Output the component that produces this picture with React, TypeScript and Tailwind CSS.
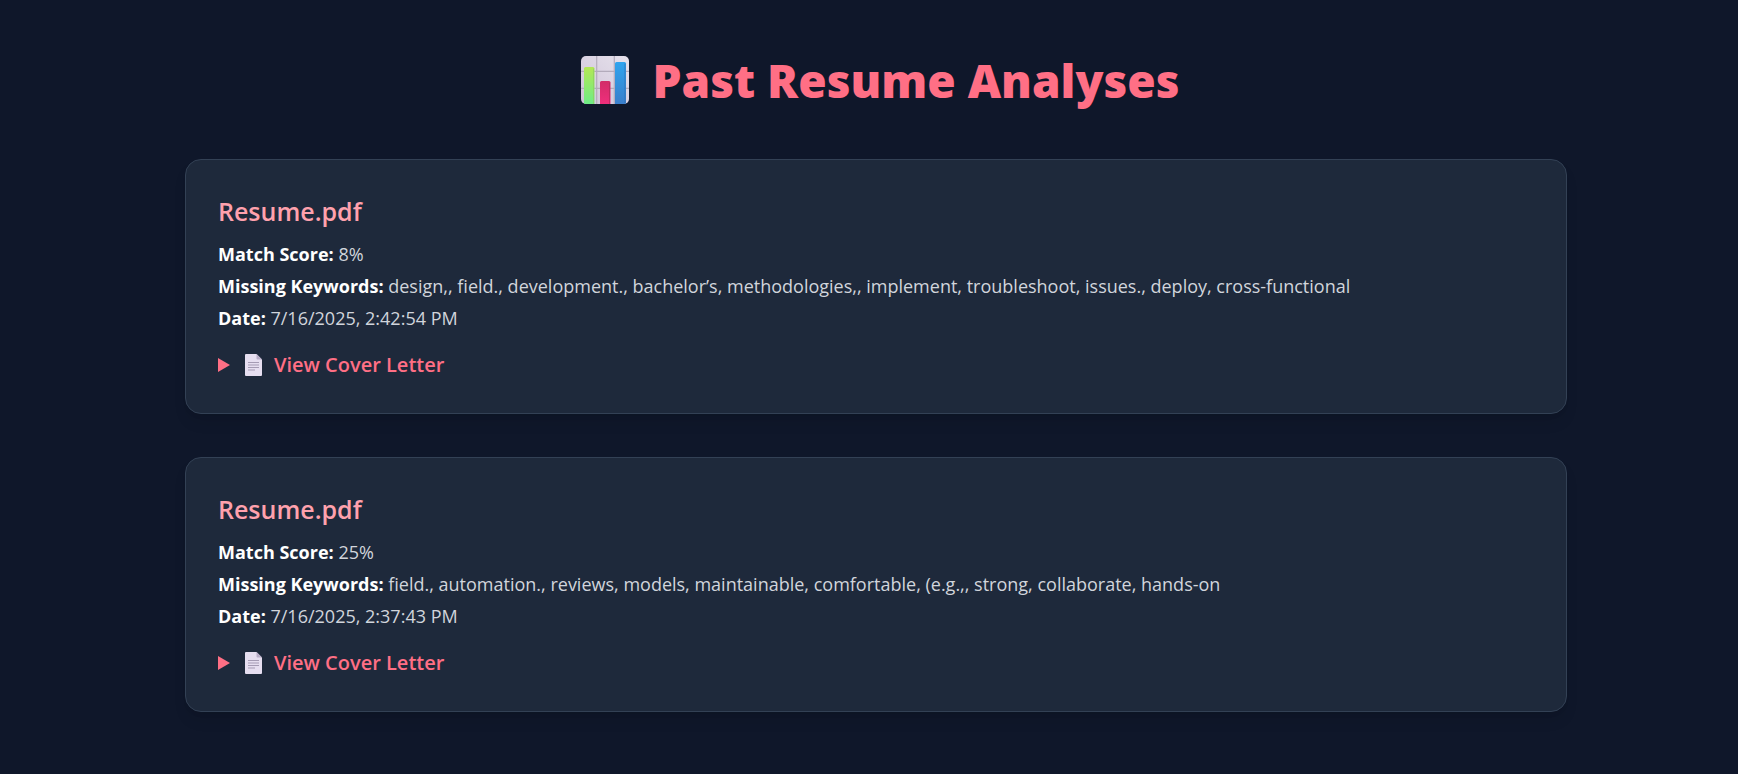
type Analysis = {
  id: number;
  file: string;
  score: string;
  keywords: string;
  date: string;
};

const analyses: Analysis[] = [
  {
    id: 1,
    file: "Resume.pdf",
    score: "8%",
    keywords:
      "design,, field., development., bachelor’s, methodologies,, implement, troubleshoot, issues., deploy, cross-functional",
    date: "7/16/2025, 2:42:54 PM",
  },
  {
    id: 2,
    file: "Resume.pdf",
    score: "25%",
    keywords:
      "field., automation., reviews, models, maintainable, comfortable, (e.g.,, strong, collaborate, hands-on",
    date: "7/16/2025, 2:37:43 PM",
  },
];

function ChartIcon() {
  return (
    <svg viewBox="0 0 48 48" className="size-12 shrink-0" aria-hidden="true">
      <defs>
        <linearGradient id="board" x1="0" y1="1" x2="1" y2="0">
          <stop offset="0" stopColor="#cfc3d8" />
          <stop offset="1" stopColor="#e6e2ec" />
        </linearGradient>
        <linearGradient id="green" x1="0" y1="0" x2="0" y2="1">
          <stop offset="0" stopColor="#b4e755" />
          <stop offset="1" stopColor="#6eec86" />
        </linearGradient>
        <linearGradient id="pink" x1="0" y1="0" x2="0" y2="1">
          <stop offset="0" stopColor="#d22c68" />
          <stop offset="1" stopColor="#ef2f7c" />
        </linearGradient>
        <linearGradient id="blue" x1="0" y1="0" x2="0" y2="1">
          <stop offset="0" stopColor="#2fa4ee" />
          <stop offset="1" stopColor="#3b7fcb" />
        </linearGradient>
        <clipPath id="frame">
          <rect width="48" height="48" rx="5" />
        </clipPath>
      </defs>
      <g clipPath="url(#frame)">
        <rect width="48" height="48" fill="url(#board)" />
        <path d="M15.7 0v48M33.3 0v48M0 15.3h48M0 32.3h48" stroke="#b3abbb" strokeWidth="1.2" />
        <path d="M3 48V12.500q0-1.500 1.500-1.500h7.500q1.500 0 1.500 1.500V48z" fill="url(#green)" />
        <path d="M19 48V26.500q0-1.500 1.500-1.500h7.500q1.500 0 1.500 1.500V48z" fill="url(#pink)" />
        <path d="M34 48V7.500q0-1.500 1.500-1.500h8q1.500 0 1.500 1.500V48z" fill="url(#blue)" />
        <path d="M12.500 12.500V48" stroke="#8fcf5f" strokeWidth="1" opacity=".7" />
        <path d="M28.500 26.500V48" stroke="#b32a5c" strokeWidth="1" opacity=".7" />
        <path d="M44 7.500V48" stroke="#2f6fb5" strokeWidth="1" opacity=".7" />
      </g>
    </svg>
  );
}

function PageIcon() {
  return (
    <svg viewBox="0 0 17 22" className="h-[22px] w-[17px] shrink-0" aria-hidden="true">
      <path d="M1 0h10.500L17 5.500V21a1 1 0 0 1-1 1H1a1 1 0 0 1-1-1V1a1 1 0 0 1 1-1z" fill="#e6def0" />
      <path d="M11.500 0 17 5.500h-4.500a1 1 0 0 1-1-1z" fill="#b9adc8" />
      <path d="M3 8.500h11M3 11h11M3 13.500h11M3 16h7" stroke="#a59bb4" strokeWidth="1" />
    </svg>
  );
}

function AnalysisCard({ item }: { item: Analysis }) {
  return (
    <article className="rounded-2xl border border-[#334155] bg-[#1e293b] p-8 shadow-lg">
      <h2 className="mb-2 text-[25px] leading-[38px] font-semibold text-[#ffa1ad]">{item.file}</h2>
      <div className="text-lg leading-8 text-[#d1d5dc]">
        <p>
          <strong className="font-bold text-white">Match Score:</strong> {item.score}
        </p>
        <p>
          <strong className="font-bold text-white">Missing Keywords:</strong> {item.keywords}
        </p>
        <p>
          <strong className="font-bold text-white">Date:</strong> {item.date}
        </p>
      </div>
      <details className="group mt-[15px]">
        <summary className="flex cursor-pointer list-none items-center text-xl leading-8 font-semibold text-[#ff6f85]">
          <svg viewBox="0 0 12 14" className="mr-[15px] h-3.5 w-3 group-open:rotate-90" aria-hidden="true">
            <path d="M0 0l12 7-12 7z" fill="currentColor" />
          </svg>
          <PageIcon />
          <span className="ml-3">View Cover Letter</span>
        </summary>
      </details>
    </article>
  );
}

export default function App() {
  return (
    <main className="min-h-screen bg-[#0f172a] py-12 pr-[171px] pl-[185px] font-['Open_Sans','Noto_Sans',sans-serif]">
      <h1 className="mb-[47px] flex items-center justify-center gap-6 pl-2 text-[46px] leading-16 font-extrabold text-[#ff6f85]">
        <ChartIcon />
        Past Resume Analyses
      </h1>
      <div className="flex flex-col gap-[43px]">
        {analyses.map((item) => (
          <AnalysisCard key={item.id} item={item} />
        ))}
      </div>
    </main>
  );
}
